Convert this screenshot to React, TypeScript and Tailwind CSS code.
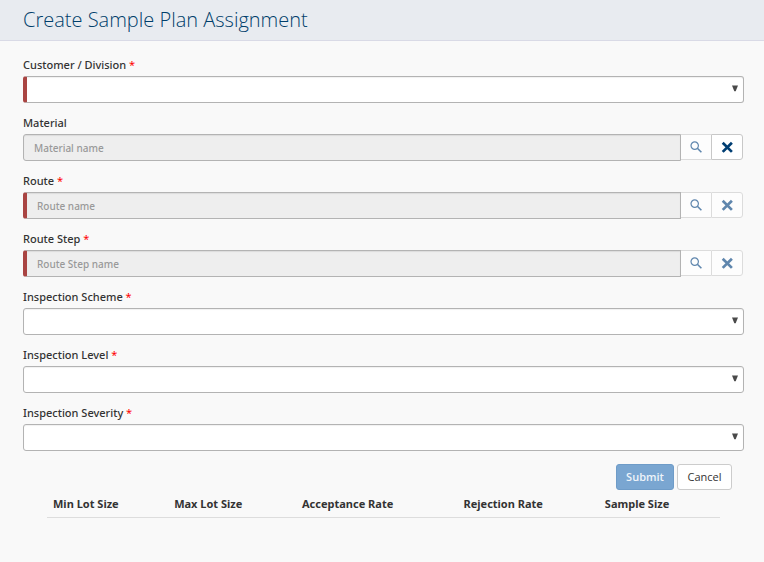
import React from "react";

type FieldProps = { id: string; label: string; required?: boolean };

function FieldLabel({ id, label, required }: FieldProps) {
  return (
    <label
      htmlFor={id}
      className="block h-5 font-['Noto_Sans','Open_Sans',sans-serif] text-[11px] leading-[18px] font-medium text-[#333]"
    >
      {label}
      {required && <span className="font-normal text-[#ff0000]"> *</span>}
    </label>
  );
}

function SelectField({ id, label, required, marked }: FieldProps & { marked?: boolean }) {
  return (
    <div>
      <FieldLabel id={id} label={label} required={required} />
      <div className="relative">
        <select
          id={id}
          className={`block h-[27px] w-full appearance-none rounded-[3px] border border-[#b3b3b3] bg-white px-2 text-[11px] shadow-[inset_0_1px_1px_rgba(0,0,0,0.06)] ${
            marked ? "border-l-4 border-l-[#a94442]" : ""
          }`}
        />
        <svg
          className="pointer-events-none absolute top-[9px] right-[6px] h-[7px] w-[6px]"
          viewBox="0 0 6 7"
          aria-hidden="true"
        >
          <path d="M0 0.6H6L3.7 6.3H2.3Z" fill="#4a4a4a" />
        </svg>
      </div>
    </div>
  );
}

function SearchIcon() {
  return (
    <svg className="h-3 w-3" viewBox="0 0 12 12" fill="none" stroke="#5f86ad" aria-hidden="true">
      <circle cx="4.7" cy="4.6" r="3.7" strokeWidth="1.2" />
      <path d="M7.4 7.3L11.4 11.2" strokeWidth="1.6" />
    </svg>
  );
}

function ClearIcon({ active }: { active?: boolean }) {
  return (
    <svg
      className={`h-3 w-3 ${active ? "text-[#003e73]" : "text-[#5f86ad]"}`}
      viewBox="0 0 12 12"
      fill="none"
      stroke="currentColor"
      aria-hidden="true"
    >
      <path d="M1.7 1.7L10.9 10.9M10.9 1.7L1.7 10.9" strokeWidth="2.7" />
    </svg>
  );
}

function LookupField({
  id,
  label,
  required,
  placeholder,
  clearable,
}: FieldProps & { placeholder: string; clearable?: boolean }) {
  return (
    <div>
      <FieldLabel id={id} label={label} required={required} />
      <div className="flex items-start pr-px">
        <input
          id={id}
          type="text"
          readOnly
          placeholder={placeholder}
          className={`h-[27px] min-w-0 flex-1 rounded-l-[3px] border border-[#b3b3b3] bg-[#eee] px-[10px] font-['Noto_Sans','Open_Sans',sans-serif] text-[10px] font-medium shadow-[inset_0_1px_1px_rgba(0,0,0,0.08)] placeholder:text-[#999] ${
            required ? "border-l-4 border-l-[#a94442]" : ""
          }`}
        />
        <button
          type="button"
          aria-label={`Search ${label}`}
          className="flex h-[26px] w-[30px] items-center justify-center border-y border-[#dcdcdc] bg-[#fdfdfd]"
        >
          <SearchIcon />
        </button>
        <button
          type="button"
          aria-label={`Clear ${label}`}
          className={`flex h-[26px] w-8 items-center justify-center rounded-r-[3px] border ${
            clearable ? "border-[#c8c8c8] bg-white" : "border-[#dcdcdc] bg-[#fdfdfd]"
          }`}
        >
          <ClearIcon active={clearable} />
        </button>
      </div>
    </div>
  );
}

export default function App() {
  return (
    <main className="min-h-screen bg-[#f9f9f9] font-['Open_Sans',sans-serif] text-[#222]">
      <header className="border-b border-[#d9dae6] bg-[#e8ebf0] px-[23px] py-[6px]">
        <h1 className="text-[20px] leading-7 font-light text-[#003e6b]">Create Sample Plan Assignment</h1>
      </header>
      <form className="pt-[15px] pr-5 pl-[23px]" onSubmit={(e) => e.preventDefault()}>
        <div className="flex flex-col gap-[11px]">
          <SelectField id="customer" label="Customer / Division" required marked />
          <LookupField id="material" label="Material" placeholder="Material name" clearable />
          <LookupField id="route" label="Route" placeholder="Route name" required />
          <LookupField id="step" label="Route Step" placeholder="Route Step name" required />
          <SelectField id="scheme" label="Inspection Scheme" required />
          <SelectField id="level" label="Inspection Level" required />
          <SelectField id="severity" label="Inspection Severity" required />
        </div>
        <div className="mt-[13px] flex justify-end gap-[3px] pr-3 text-[11px]">
          <button
            type="submit"
            className="h-[26px] w-[58px] rounded-[3px] border border-[#6f9cc8] bg-[#7aa6d1] font-semibold text-[#eef4fa]"
          >
            Submit
          </button>
          <button type="button" className="h-[26px] w-[55px] rounded-[3px] border border-[#ccc] bg-white text-[#333]">
            Cancel
          </button>
        </div>
      </form>
      <div className="pr-11 pl-[47px]">
        <table className="w-full table-fixed border-collapse text-left font-['Noto_Sans','Open_Sans',sans-serif] text-[11px] leading-[18px] text-[#333]">
          <thead>
            <tr className="border-b border-[#ddd]">
              <th className="w-[18%] pt-[5px] pb-1 pl-1.5 font-bold">Min Lot Size</th>
              <th className="w-[19%] pt-[5px] pb-1 pl-1.5 font-bold">Max Lot Size</th>
              <th className="w-[24%] pt-[5px] pb-1 pl-1.5 font-bold">Acceptance Rate</th>
              <th className="w-[21%] pt-[5px] pb-1 pl-1.5 font-bold">Rejection Rate</th>
              <th className="w-[18%] pt-[5px] pb-1 pl-1.5 font-bold">Sample Size</th>
            </tr>
          </thead>
        </table>
      </div>
    </main>
  );
}
